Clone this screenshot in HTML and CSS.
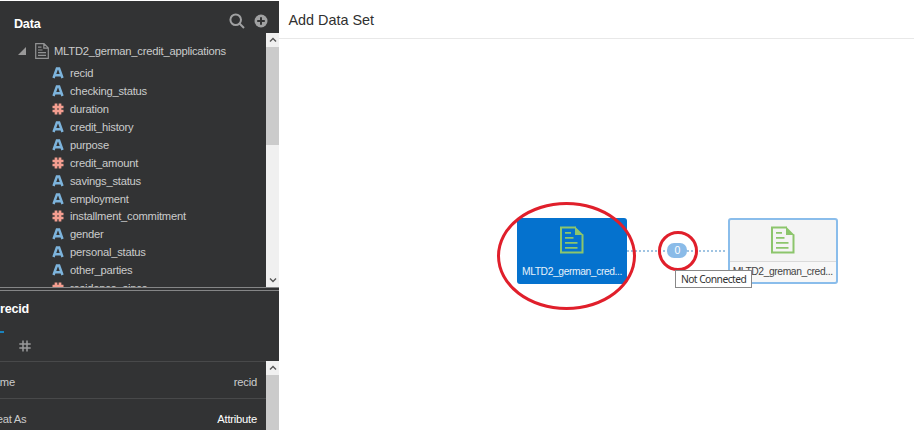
FILE: index.html
```html
<!DOCTYPE html>
<html lang="en">
<head>
<meta charset="utf-8">
<title>Add Data Set</title>
<link rel="stylesheet" href="styles.css">
</head>
<body>
<svg class="defs" width="0" height="0">
  <symbol id="text-type" viewBox="0 0 12 12"><path d="M1.500 11 4.900 1.500h2.200L10.500 11M3.200 8.300h5.600" fill="none" stroke="#7db4dc" stroke-width="2.500"/></symbol>
  <symbol id="number-type" viewBox="0 0 12 12"><path d="M4 .6v10.800M8 .6v10.800M.5 4h11M.5 8h11" fill="none" stroke="#f49e90" stroke-width="2.700"/></symbol>
  <symbol id="caret-up" viewBox="0 0 14 14"><path d="M4 8.500 7 5.500l3 3" fill="none" stroke="#555" stroke-width="1.400"/></symbol>
  <symbol id="caret-down" viewBox="0 0 14 14"><path d="M4 5.500 7 8.500l3-3" fill="none" stroke="#555" stroke-width="1.400"/></symbol>
  <symbol id="doc" viewBox="0 0 26 28"><path d="M17 1.500H2v25h21.500V8.500" fill="none" stroke="#8cc56c" stroke-width="2"/><path d="M16 .5 24.500 9H16zM6 6h6v1.800H6zM6 11h8.500v1.800H6zM6 16h12.500v1.800H6zM6 21h12.500v1.800H6z" fill="#8cc56c"/></symbol>
</svg>
<div class="app">
  <aside class="sidebar">
    <header class="data-head">
      <h2>Data</h2>
      <svg class="search" viewBox="0 0 16 16"><circle cx="6.700" cy="6.700" r="5.300"/><path d="m10.500 10.500 4.500 4.500"/></svg>
      <svg class="add" viewBox="0 0 14 14"><circle cx="7" cy="7" r="6.500" fill="#a0a1a2"/><path d="M7 3.200v7.600M3.200 7h7.600" stroke="#323334" stroke-width="2"/></svg>
    </header>
    <div class="tree-area">
      <div class="tree">
        <div class="root">
          <svg class="expand" viewBox="0 0 8 8"><path d="M8 0v8H0z" fill="#999"/></svg>
          <svg class="root-doc" viewBox="0 0 14 16"><path d="M.7.700h8.300l4.300 4.200v10.400H.7zM8.800.700v4.400h4.500M3 4.200h3.500M3 7h4.500M3 9.700h8M3 12.400h8" fill="none" stroke="#929394" stroke-width="1.200"/></svg>
          <span>MLTD2_german_credit_applications</span>
        </div>
        <ul class="fields">
          <li><svg><use href="#text-type"/></svg>recid</li>
          <li><svg><use href="#text-type"/></svg>checking_status</li>
          <li><svg><use href="#number-type"/></svg>duration</li>
          <li><svg><use href="#text-type"/></svg>credit_history</li>
          <li><svg><use href="#text-type"/></svg>purpose</li>
          <li><svg><use href="#number-type"/></svg>credit_amount</li>
          <li><svg><use href="#text-type"/></svg>savings_status</li>
          <li><svg><use href="#text-type"/></svg>employment</li>
          <li><svg><use href="#number-type"/></svg>installment_commitment</li>
          <li><svg><use href="#text-type"/></svg>gender</li>
          <li><svg><use href="#text-type"/></svg>personal_status</li>
          <li><svg><use href="#text-type"/></svg>other_parties</li>
          <li><svg><use href="#number-type"/></svg>residence_since</li>
        </ul>
      </div>
      <div class="scrollbar">
        <svg><use href="#caret-up"/></svg><div class="thumb"></div><svg class="end"><use href="#caret-down"/></svg>
      </div>
    </div>
    <div class="splitter"></div>
    <section class="details">
      <h3>recid</h3>
      <div class="tabs">
        <span class="tab-active"></span>
        <svg viewBox="0 0 12 12"><path d="M4 .5v11M8 .5v11M.3 4h11.400M.3 8h11.400" stroke="#999a9b" stroke-width="1.500"/></svg>
      </div>
      <div class="props-area">
        <div class="props">
          <div class="prop"><span class="label">Name</span><span>recid</span></div>
          <div class="prop treat"><span class="label">Treat As</span><strong>Attribute</strong></div>
        </div>
        <div class="scrollbar"><svg><use href="#caret-up"/></svg><div class="thumb"></div></div>
      </div>
    </section>
  </aside>
  <main class="main">
    <header class="main-head">Add Data Set</header>
    <div class="canvas">
      <div class="node source"><svg><use href="#doc"/></svg><span>MLTD2_german_cred...</span></div>
      <div class="link"></div>
      <div class="count">0</div>
      <div class="node target"><svg><use href="#doc"/></svg><span>MLTD2_greman_cred...</span></div>
      <div class="ring ring-large"></div>
      <div class="ring ring-small"></div>
      <div class="tooltip">Not Connected</div>
    </div>
  </main>
</div>
</body>
</html>
```
FILE: styles.css
```css
* { box-sizing: border-box; }
body { margin: 0; background: #fff; font-family: "Liberation Sans", Arial, sans-serif; overflow: hidden; }
svg { display: block; flex: none; }
.defs { position: absolute; }
h2, h3, ul { margin: 0; padding: 0; }
.app { display: flex; height: 434px; padding: 1px 0 4px; }
.sidebar { width: 279.400px; height: 429px; flex: none; display: flex; flex-direction: column; overflow: hidden; background: #323334; color: #cbcccc; font-size: 11.200px; letter-spacing: -.22px; }
.data-head { height: 32px; flex: none; display: flex; align-items: center; padding: 8px 11px 0 14px; }
.data-head h2 { flex: 1; color: #fff; font-size: 12.6px; line-height: 14px; padding-top: 6px; }
.search { width: 16px; height: 16px; margin-right: 9px; fill: none; stroke: #a0a1a2; stroke-width: 2; }
.add { width: 14px; height: 14px; }
.tree-area { display: flex; height: 254px; flex: none; }
.tree { flex: 1; min-width: 0; overflow: hidden; padding-top: 8px; }
.root { display: flex; align-items: center; height: 20px; padding-left: 18px; white-space: nowrap; }
.expand { width: 8px; height: 8px; }
.root-doc { width: 14px; height: 16px; margin: 0 5px 0 9px; }
.fields { list-style: none; padding-top: 3px; }
.fields li { display: flex; align-items: center; height: 17.950px; }
.fields svg { width: 12px; height: 12px; margin: 0 6px 0 52px; }
.scrollbar { width: 13.400px; flex: none; display: flex; flex-direction: column; background: #f0f0f0; }
.scrollbar svg { width: 14px; height: 14px; }
.thumb { height: 98px; flex: none; background: #cbcbcb; }
.end { margin-top: auto; }
.splitter { height: 4px; flex: none; border: solid #858687; border-width: 1px 0; }
.details { flex: 1; display: flex; flex-direction: column; }
.details h3 { height: 40px; flex: none; padding-top: 11px; color: #fff; font-size: 12.6px; line-height: 14px; }
.tabs { height: 30px; flex: none; display: flex; align-items: flex-start; }
.tab-active { width: 4px; height: 2px; background: #1a83bd; }
.tabs svg { width: 12px; height: 12px; margin: 9px 0 0 15px; }
.props-area { height: 69px; display: flex; overflow: hidden; }
.props { flex: 1; min-width: 0; }
.prop { height: 37px; display: flex; align-items: center; justify-content: space-between; border-top: 1px solid #48494a; padding: 3px 9px 0 0; }
.label { margin-left: -14px; }
.treat .label { margin-left: -13px; }
.prop strong { color: #fff; font-weight: 400; }
.main { flex: 1; display: flex; flex-direction: column; min-width: 0; }
.main-head { height: 38px; flex: none; border-bottom: 1px solid #e8e8e8; padding-left: 9px; color: #303030; font-size: 14.4px; line-height: 39px; }
.canvas { flex: 1; position: relative; }
.node { position: absolute; top: 179px; width: 110px; height: 66px; border-radius: 3px; display: flex; flex-direction: column; align-items: center; padding-top: 8px; font-size: 10.300px; letter-spacing: -.4px; white-space: nowrap; }
.node svg { width: 26px; height: 28px; margin-bottom: 11px; }
.node span { line-height: 14px; }
.source { left: 237.600px; background: #0572ce; color: #e6f1fa; }
.target { left: 448.300px; border: 2px solid #8abdeb; background: linear-gradient(#f4f4f4 41px, #dadada 41px, #dadada 42px, #f7f7f7 42px); color: #444; padding-top: 6px; }
.link { position: absolute; left: 348px; top: 211px; width: 100px; height: 2px; background: repeating-linear-gradient(90deg, #a0c4e2 0 2px, transparent 2px 4px); }
.count { position: absolute; left: 388px; top: 204px; width: 20px; height: 15px; border-radius: 7px; background: #8abbe8; color: #fff; font-size: 10.500px; line-height: 15px; text-align: center; }
.ring { position: absolute; border: 3.400px solid #e01f2b; border-radius: 50%; }
.ring-large { left: 218px; top: 163px; width: 139px; height: 108px; }
.ring-small { left: 379px; top: 192px; width: 40px; height: 40px; }
.tooltip { position: absolute; left: 395.700px; top: 231px; width: 77px; height: 18px; border: 1px solid #888; background: #fff; color: #333; font: 10.300px/17px "Noto Sans", sans-serif; letter-spacing: -.55px; text-align: center; white-space: nowrap; }
```
